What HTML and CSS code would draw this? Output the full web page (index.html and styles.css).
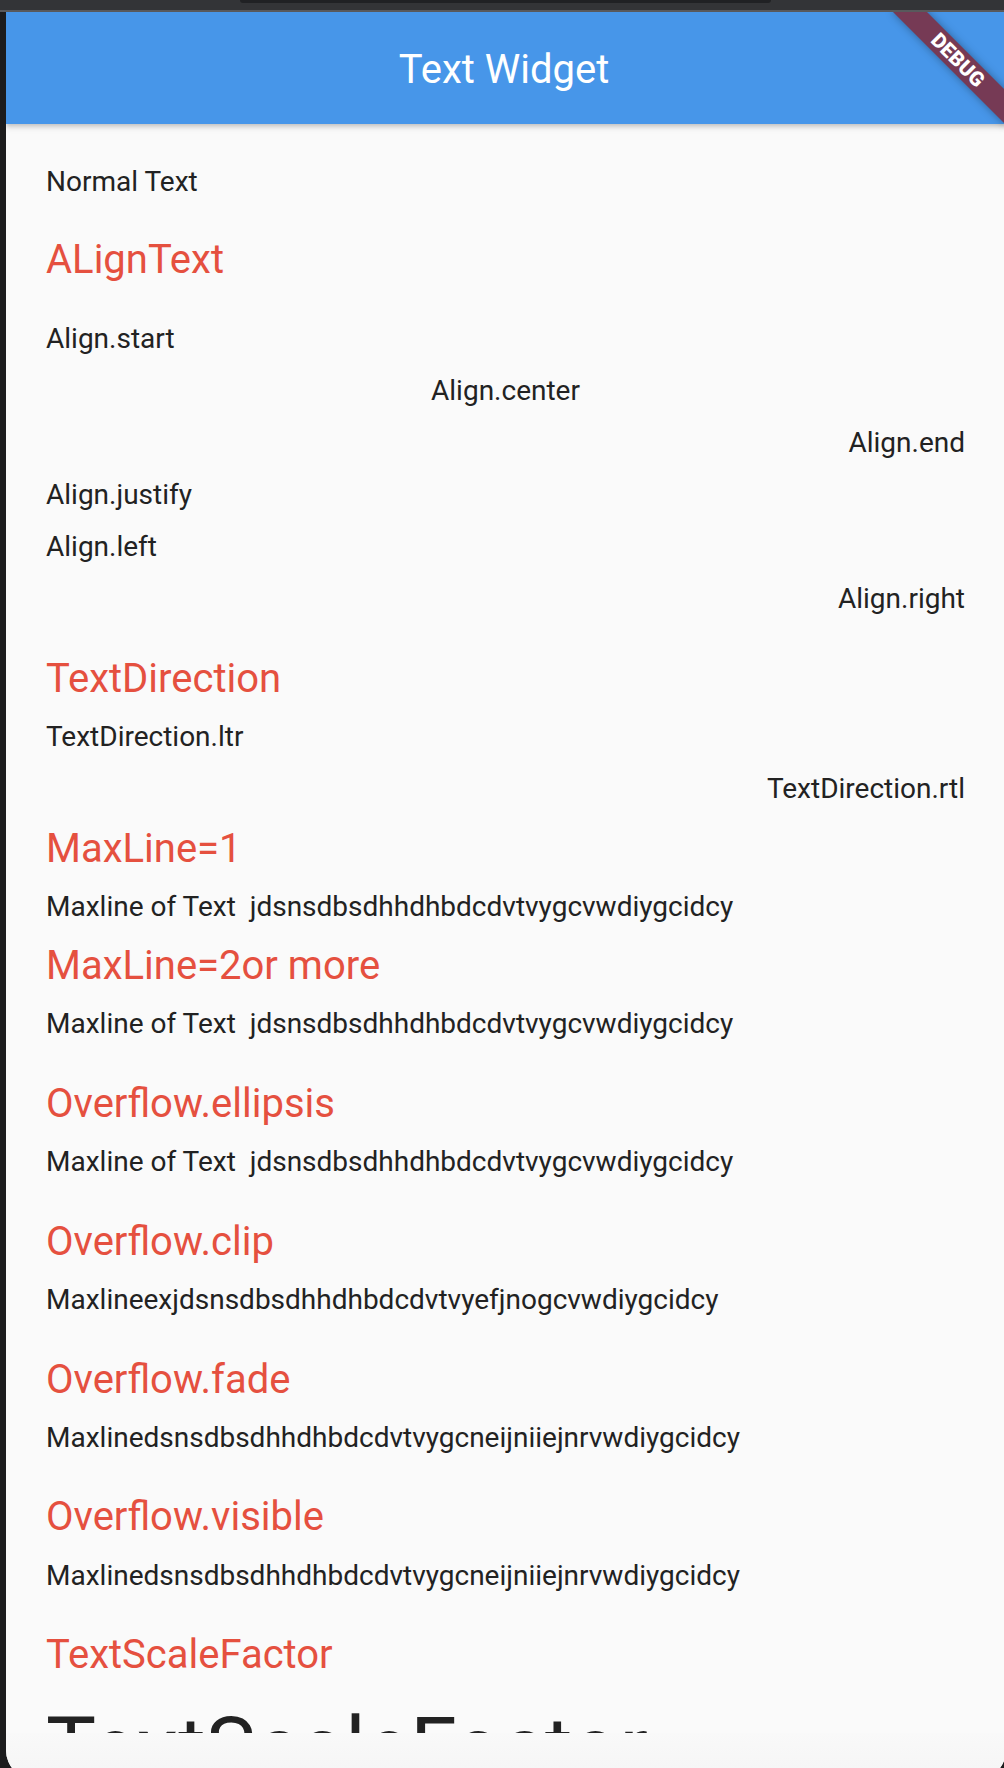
FILE: index.html
```html
<!DOCTYPE html>
<html lang="en">
<head>
<meta charset="utf-8">
<title>Text Widget</title>
<link rel="stylesheet" href="styles.css">
</head>
<body>
  <div class="frame-top"><div class="pill"></div></div>
  <div class="screen">
    <header class="appbar"><h1 class="appbar-title">Text Widget</h1></header>
    <div class="banner"><span>DEBUG</span></div>
    <main class="content">
      <p class="t first">Normal Text</p>
      <h2 class="h h-align">ALignText</h2>
      <p class="t a-start">Align.start</p>
      <p class="t a-item a-center">Align.center</p>
      <p class="t a-item a-end">Align.end</p>
      <p class="t a-item">Align.justify</p>
      <p class="t a-item">Align.left</p>
      <p class="t a-item a-end">Align.right</p>

      <h2 class="h">TextDirection</h2>
      <p class="t t-ltr">TextDirection.ltr</p>
      <p class="t t-rtl a-end">TextDirection.rtl</p>

      <h2 class="h h-tight">MaxLine=1</h2>
      <p class="t one-line">Maxline of Text  jdsnsdbsdhhdhbdcdvtvygcvwdiygcidcy</p>
      <h2 class="h h-tight2">MaxLine=2or more</h2>
      <p class="t two-line">Maxline of Text  jdsnsdbsdhhdhbdcdvtvygcvwdiygcidcy</p>

      <h2 class="h">Overflow.ellipsis</h2>
      <p class="t one-line ellipsis">Maxline of Text  jdsnsdbsdhhdhbdcdvtvygcvwdiygcidcy</p>
      <h2 class="h">Overflow.clip</h2>
      <p class="t one-line">Maxlineexjdsnsdbsdhhdhbdcdvtvyefjnogcvwdiygcidcy</p>
      <h2 class="h">Overflow.fade</h2>
      <p class="t one-line">Maxlinedsnsdbsdhhdhbdcdvtvygcneijniiejnrvwdiygcidcy</p>
      <h2 class="h">Overflow.visible</h2>
      <p class="t">Maxlinedsnsdbsdhhdhbdcdvtvygcneijniiejnrvwdiygcidcy</p>

      <h2 class="h">TextScaleFactor</h2>
      <p class="big">TextScaleFactor</p>
    </main>
    <div class="gesture-area"></div>
  </div>
</body>
</html>
```
FILE: styles.css
```css
* { box-sizing: border-box; }

html, body {
  margin: 0;
  padding: 0;
}

body {
  width: 1004px;
  height: 1768px;
  overflow: hidden;
  background: #1c1c1d;
  font-family: Roboto, "Liberation Sans", sans-serif;
}

.frame-top {
  height: 12px;
  background: #333437;
  border-bottom: 2px solid #58595c;
  position: relative;
}

.pill {
  position: absolute;
  left: 240px;
  top: 0;
  width: 531px;
  height: 3px;
  background: #202124;
  border-radius: 0 0 4px 4px;
}

.screen {
  position: relative;
  margin-left: 6px;
  width: 1000px;
  height: 1768px;
  background: #fafafa;
  border-radius: 0 0 30px 30px;
  overflow: hidden;
}

.appbar {
  position: relative;
  z-index: 2;
  height: 112px;
  background: #4796e9;
  display: flex;
  align-items: center;
  justify-content: center;
  box-shadow: 0 2px 4px rgba(0, 0, 0, 0.14), 0 4px 6px rgba(0, 0, 0, 0.10);
}

.appbar-title {
  margin: 2px 0 0 -4px;
  font-size: 40px;
  line-height: 47px;
  font-weight: 400;
  color: #ffffff;
}

.banner {
  position: absolute;
  z-index: 5;
  top: 36px;
  right: -32px;
  width: 160px;
  height: 24px;
  transform: rotate(45deg);
  background: #763a55;
  box-shadow: 0 0 8px rgba(0, 0, 0, 0.35);
  display: flex;
  align-items: center;
  justify-content: center;
}

.banner span {
  color: #ffffff;
  font-size: 20.4px;
  font-weight: 900;
  line-height: 1;
  letter-spacing: 0.2px;
}

.content {
  padding: 0 41px 0 40px;
}

.t {
  margin: 18.1px 0 0;
  font-size: 28px;
  line-height: 33px;
  color: #222222;
  white-space: pre;
}

.h {
  margin: 39.7px 0 0;
  font-size: 40px;
  line-height: 47px;
  font-weight: 400;
  color: #e5503f;
}

.first { margin-top: 40.6px; }
.h-align { margin-top: 38.2px; }
.a-start { margin-top: 38.8px; }
.a-item { margin-top: 19.1px; }
.a-center { text-align: center; }
.a-end { text-align: right; }
.t-ltr { margin-top: 18px; }
.t-rtl { margin-top: 19px; }
.h-tight { margin-top: 20px; }
.h-tight2 { margin-top: 19.5px; }

.one-line {
  overflow: hidden;
}

.ellipsis {
  text-overflow: ellipsis;
}

.big {
  margin: 19.5px 0 0;
  font-size: 84px;
  line-height: normal;
  color: #222222;
  white-space: nowrap;
}

.gesture-area {
  position: absolute;
  left: 0;
  right: 0;
  bottom: 0;
  height: 47px;
  background: linear-gradient(180deg, #f9f9f9 0%, #f5f5f5 100%);
}
```
